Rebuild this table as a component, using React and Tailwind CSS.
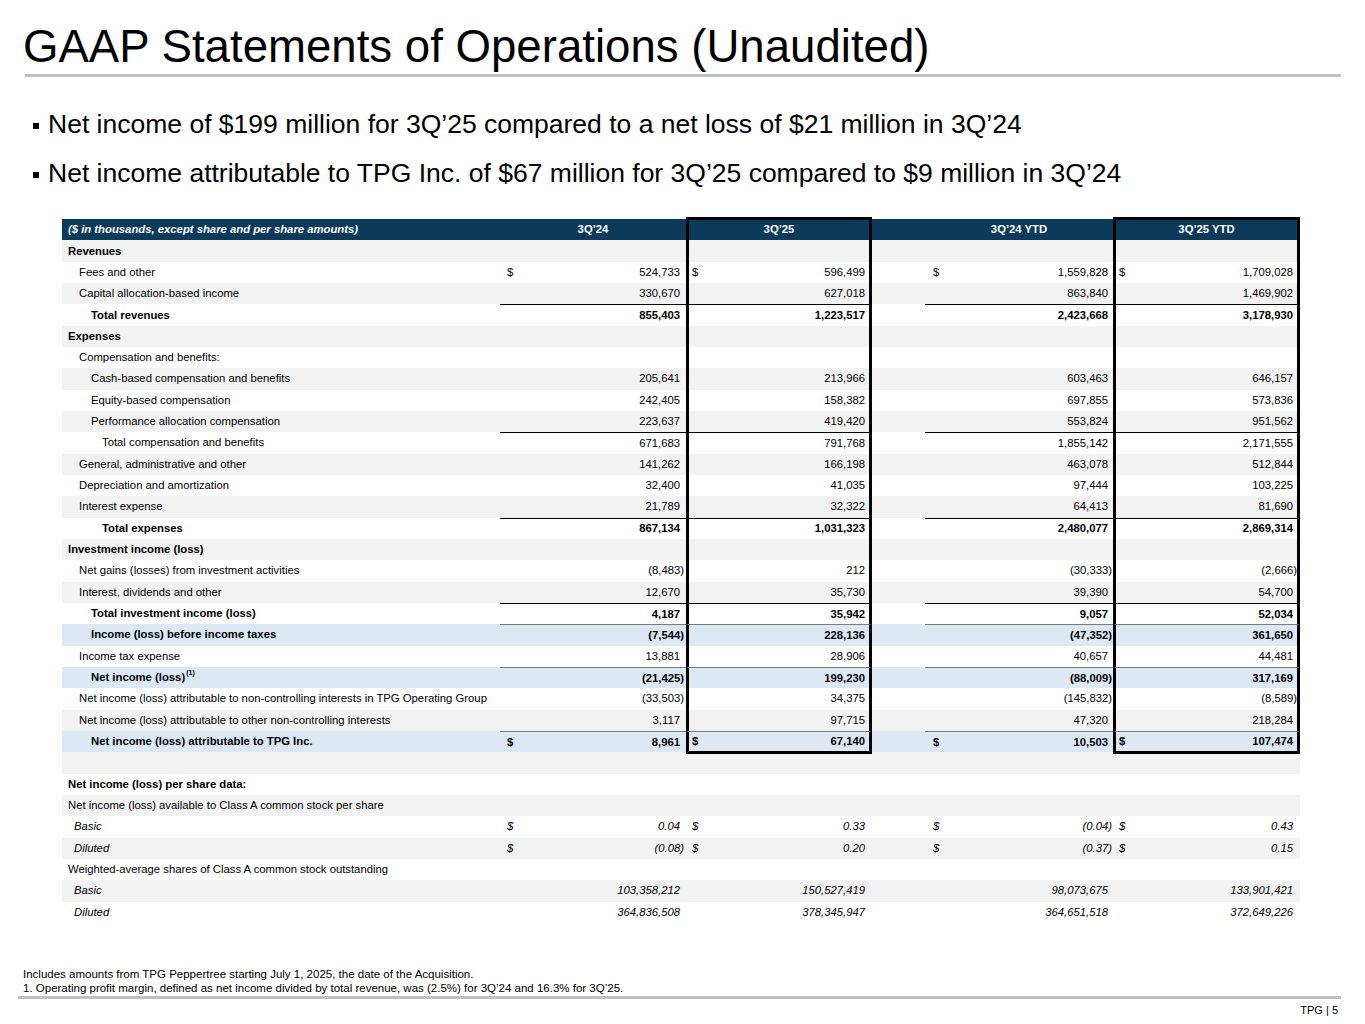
import React from "react";

const rows = [
  { label: "Revenues", bold: true },
  { label: "Fees and other", indent: 1, dollar: true, vals: ["524,733", "596,499", "1,559,828", "1,709,028"] },
  { label: "Capital allocation-based income", indent: 1, vals: ["330,670", "627,018", "863,840", "1,469,902"] },
  { label: "Total revenues", indent: 2, bold: true, line: "dark", vals: ["855,403", "1,223,517", "2,423,668", "3,178,930"] },
  { label: "Expenses", bold: true },
  { label: "Compensation and benefits:", indent: 1 },
  { label: "Cash-based compensation and benefits", indent: 2, vals: ["205,641", "213,966", "603,463", "646,157"] },
  { label: "Equity-based compensation", indent: 2, vals: ["242,405", "158,382", "697,855", "573,836"] },
  { label: "Performance allocation compensation", indent: 2, vals: ["223,637", "419,420", "553,824", "951,562"] },
  { label: "Total compensation and benefits", indent: 3, line: "dark", plainVals: true, vals: ["671,683", "791,768", "1,855,142", "2,171,555"] },
  { label: "General, administrative and other", indent: 1, vals: ["141,262", "166,198", "463,078", "512,844"] },
  { label: "Depreciation and amortization", indent: 1, vals: ["32,400", "41,035", "97,444", "103,225"] },
  { label: "Interest expense", indent: 1, vals: ["21,789", "32,322", "64,413", "81,690"] },
  { label: "Total expenses", indent: 3, bold: true, line: "dark", vals: ["867,134", "1,031,323", "2,480,077", "2,869,314"] },
  { label: "Investment income (loss)", bold: true },
  { label: "Net gains (losses) from investment activities", indent: 1, vals: ["(8,483)", "212", "(30,333)", "(2,666)"] },
  { label: "Interest, dividends and other", indent: 1, vals: ["12,670", "35,730", "39,390", "54,700"] },
  { label: "Total investment income (loss)", indent: 2, bold: true, line: "dark", vals: ["4,187", "35,942", "9,057", "52,034"] },
  { label: "Income (loss) before income taxes", indent: 2, bold: true, blue: true, line: "gray", vals: ["(7,544)", "228,136", "(47,352)", "361,650"] },
  { label: "Income tax expense", indent: 1, vals: ["13,881", "28,906", "40,657", "44,481"] },
  { label: "Net income (loss)", sup: "(1)", indent: 2, bold: true, blue: true, line: "gray", vals: ["(21,425)", "199,230", "(88,009)", "317,169"] },
  { label: "Net income (loss) attributable to non-controlling interests in TPG Operating Group", indent: 1, vals: ["(33,503)", "34,375", "(145,832)", "(8,589)"] },
  { label: "Net income (loss) attributable to other non-controlling interests", indent: 1, vals: ["3,117", "97,715", "47,320", "218,284"] },
  { label: "Net income (loss) attributable to TPG Inc.", indent: 2, bold: true, blue: true, line: "gray", dollar: true, last: true, vals: ["8,961", "67,140", "10,503", "107,474"] },
  { label: "" },
  { label: "Net income (loss) per share data:", bold: true },
  { label: "Net income (loss) available to Class A common stock per share" },
  { label: "Basic", italic: true, dollar: true, vals: ["0.04", "0.33", "(0.04)", "0.43"] },
  { label: "Diluted", italic: true, dollar: true, vals: ["(0.08)", "0.20", "(0.37)", "0.15"] },
  { label: "Weighted-average shares of Class A common stock outstanding" },
  { label: "Basic", italic: true, vals: ["103,358,212", "150,527,419", "98,073,675", "133,901,421"] },
  { label: "Diluted", italic: true, vals: ["364,836,508", "378,345,947", "364,651,518", "372,649,226"] },
];

const indentClass = (r) => {
  if (r.italic) return "pl-[12px] italic";
  if (r.indent === 1) return "pl-[17px]";
  if (r.indent === 2) return "pl-[29px]";
  if (r.indent === 3) return "pl-[40px]";
  return "pl-[6px]";
};

// column widths / paddings, written out so tailwind picks them up
const colClass = [
  "w-[186px] pl-[7px] pr-[6px]",
  "w-[186px] pl-[3px] pr-[4px]",
  "w-[188px] pl-[8px] pr-[5px]",
  "w-[187px] pl-[3px] pr-[4px]",
];
const openColClass = [
  "w-[186px] pl-[7px] pr-[6px]",
  "w-[186px] pl-[6px] pr-[7px]",
  "w-[188px] pl-[8px] pr-[5px]",
  "w-[187px] pl-[6px] pr-[7px]",
];

const ValueCell = ({ row, col, boxed }) => {
  const v = row.vals ? row.vals[col] : "";
  const neg = v.startsWith("(");
  let border = "";
  if (boxed) border += " border-x-[3px] border-black";
  if (row.line === "dark") border += " border-t border-t-black";
  if (row.line === "gray") border += " border-t border-t-[#7a7a7a]";
  if (boxed && row.last) border += " border-b-[3px] h-[calc(100%+2px)] relative z-10";
  else border += " h-full";
  const weight = row.bold && !row.plainVals ? "font-bold" : "";
  const pad = boxed ? colClass[col] : openColClass[col];
  return (
    <div className={`flex items-center justify-between box-border shrink-0 ${pad}${border} ${weight} ${row.italic ? "italic" : ""}`}>
      <span>{row.dollar ? "$" : ""}</span>
      <span className={neg ? "-mr-[4px]" : ""}>{v}</span>
    </div>
  );
};

const Row = ({ row, i }) => {
  let bg = i % 2 === 0 ? "bg-[#f2f2f2]" : "bg-white";
  if (row.blue) bg = "bg-[#dce8f4]";
  const boxed = i <= 23;
  return (
    <div className={`flex h-[21.33px] ${bg}`}>
      <div className={`w-[438px] shrink-0 flex items-center whitespace-nowrap ${indentClass(row)} ${row.bold ? "font-bold" : ""}`}>
        {row.label}
        {row.sup && <span className="text-[7px] relative -top-[4px] ml-[1px] font-bold">{row.sup}</span>}
      </div>
      <ValueCell row={row} col={0} boxed={false} />
      <ValueCell row={row} col={1} boxed={boxed} />
      <div className="w-[53px] shrink-0" />
      <ValueCell row={row} col={2} boxed={false} />
      <ValueCell row={row} col={3} boxed={boxed} />
    </div>
  );
};

const Bullet = ({ children }) => (
  <div className="flex items-center h-[30px] pl-[33px]">
    <span className="w-[6px] h-[6px] bg-black mt-[3px]" />
    <span className="ml-[9px] text-[26.5px] leading-[30px]">{children}</span>
  </div>
);

export default function App() {
  return (
    <div className="w-[1365px] h-[1024px] bg-white text-black font-['Liberation_Sans',Arial,sans-serif] overflow-hidden">
      <h1 className="pt-[24px] pl-[23px] text-[45.6px] leading-[45px] font-normal">
        GAAP Statements of Operations (Unaudited)
      </h1>
      <div className="mt-[5px] ml-[25px] w-[1316px] h-[3px] bg-[#c0c0c0]" />

      <div className="mt-[32px] flex flex-col gap-[19px]">
        <Bullet>Net income of $199 million for 3Q’25 compared to a net loss of $21 million in 3Q’24</Bullet>
        <Bullet>Net income attributable to TPG Inc. of $67 million for 3Q’25 compared to $9 million in 3Q’24</Bullet>
      </div>

      {/* statement table */}
      <div className="mt-[31px] ml-[62px] w-[1238px] text-[11.3px]">
        <div className="flex h-[21.33px] bg-[#0c3a5b] text-white font-bold">
          <div className="w-[438px] flex items-center pl-[6px] italic">
            ($ in thousands, except share and per share amounts)
          </div>
          <div className="w-[186px] flex items-center justify-center">3Q’24</div>
          <div className="w-[186px] -mt-[2px] h-[23.33px] box-border border-t-[3px] border-x-[3px] border-black flex items-center justify-center pb-[2px]">
            3Q’25
          </div>
          <div className="w-[53px]" />
          <div className="w-[188px] flex items-center justify-center">3Q’24 YTD</div>
          <div className="w-[187px] -mt-[2px] h-[23.33px] box-border border-t-[3px] border-x-[3px] border-black flex items-center justify-center pb-[2px]">
            3Q’25 YTD
          </div>
        </div>
        {rows.map((r, i) => (
          <Row key={i} row={r} i={i} />
        ))}
      </div>

      <div className="mt-[44px] pl-[23px] text-[11.5px] leading-[14px]">
        <p>Includes amounts from TPG Peppertree starting July 1, 2025, the date of the Acquisition.</p>
        <p>1. Operating profit margin, defined as net income divided by total revenue, was (2.5%) for 3Q’24 and 16.3% for 3Q’25.</p>
      </div>
      <div className="mt-[1px] ml-[18px] w-[1323px] h-[3px] bg-[#c0c0c0]" />
      <div className="mt-[4px] pr-[27px] text-right text-[11px] leading-[14px]">TPG | 5</div>
    </div>
  );
}
